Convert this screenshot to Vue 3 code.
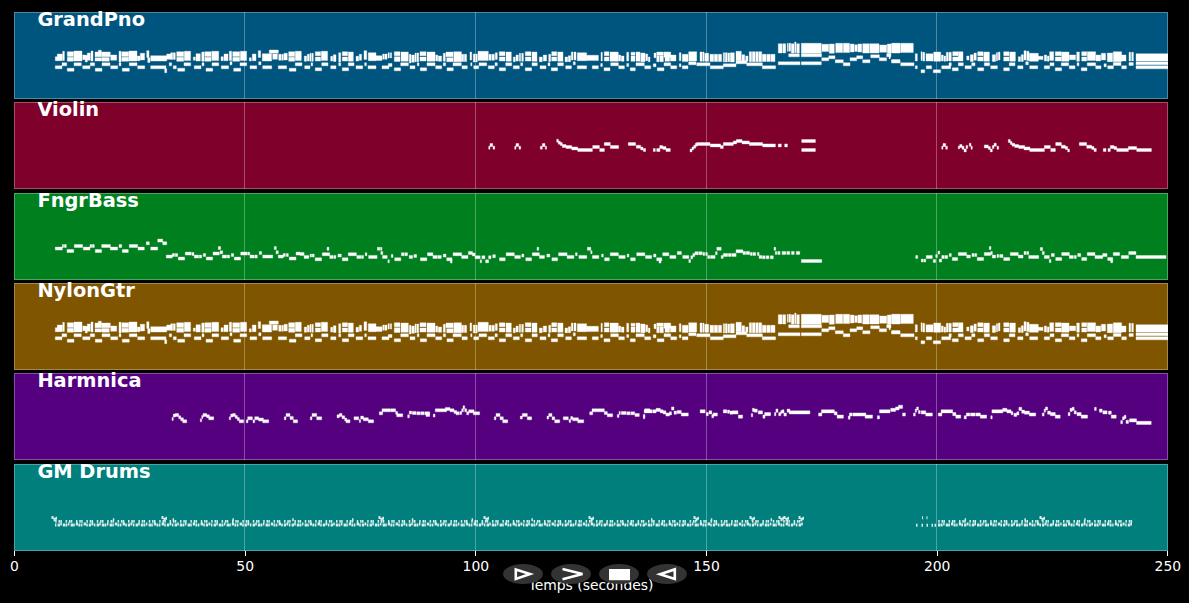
<template>
  <div class="player">
    <div class="tracks">
      <section v-for="track in tracks" :key="track.name" class="track" :class="track.color">
        <h2>{{ track.name }}</h2>
        <svg class="roll" :viewBox="`14 ${track.top} 1154 87`" preserveAspectRatio="none">
          <path v-for="(d, i) in track.paths" :key="i" class="notes" :class="{ drums: track.color === 'teal' }" :d="d" />
          <path class="grid" :d="`M244.5 ${track.top}v87M475.5 ${track.top}v87M706.5 ${track.top}v87M936.5 ${track.top}v87`" />
        </svg>
      </section>
    </div>
    <div class="axis">
      <div v-for="t in ticks" :key="t" class="tick"><span>{{ t }}</span></div>
    </div>
    <p class="label">Temps (secondes)</p>
    <div class="controls">
      <button v-for="icon in icons" :key="icon.name" :aria-label="icon.name">
        <svg viewBox="0 0 40 20" width="40" height="20">
          <path :d="icon.d" :class="{ solid: icon.solid }" />
        </svg>
      </button>
    </div>
  </div>
</template>

<script setup>
const ticks = [0, 50, 100, 150, 200, 250];

const icons = [
  { name: 'play', d: 'M12.8 5.6L27 10.1L12.8 14.9Z' },
  { name: 'forward', d: 'M11.5 5L31.5 10.1L11.5 15.3' },
  { name: 'stop', d: 'M10 5h21v11.2h-21z', solid: true },
  { name: 'back', d: 'M27.8 5.4V15L13 10.2Z' },
];

// "start-end@pitch*height" in 1/scale pixels from the phrase origin
function phrase(ox, oy, text, scale) {
  return text.trim().split(/[\s,]+/).map((note) => {
    const [span, rest] = note.split('@');
    const [x1, x2] = span.split('-').map(Number);
    const [y, h = 9] = rest.split('*').map(Number);
    const left = (ox + x1 / scale).toFixed(1);
    const top = (oy + (y - h / 2) / scale).toFixed(1);
    return `M${left} ${top}h${((x2 - x1) / scale).toFixed(1)}v${(h / scale).toFixed(1)}H${left}z`;
  }).join('');
}

const piano = [
  [0, 0, `166-172@176*12 172-187@172*20 188-193@168*28 202-221@162*14 202-221@178*12 222-246@168*30 248-256@172*14 256-262@176*20
    262-271@170*22 273-279@168*30 285-305@163*14 285-305@178*10 295-304@155*9 306-331@163*14 306-328@178*11 332-350@173*16 357-363@170*32 365-386@162*14
    365-386@178*12 387-411@168*30 412-420@175*14 421-434@170*20 440-447@162*20 443-450@180*14 452-500@175*16 500-512@170*16
    512-518@168*20 520-526@168*20 530-551@162*14 530-551@178*12 553-572@168*28 580-586@176*10 588-601@172*22 605-612@170*28 614-633@162*14 614-633@178*12
    635-656@168*28 663-670@176*12 672-684@172*20 688-695@168*28 698-719@162*14 698-719@178*12 721-740@168*28 748-754@178*10 757-768@172*20
    775-782@162*20 787-815@172*22 808-835@155*10 818-832@170*16 836-843@172*18 845-850@172*18 852-862@170*20 866-884@162*14 866-884@178*12 886-900@168*28
    166-186@202 186-200@193 202-222@209 222-244@193 248-270@202 271-284@193 286-306@209 306-330@193 332-353@202 357-363@193
    367-388@209 388-411@193 413-434@202 452-498@202 494-500@212*12 508-515@193 520-529@202 533-554@209 552-572@193 583-603@202
    606-612@193 618-638@209 636-656@193 664-686@202 690-696@190 701-722@209 720-740@193 750-770@202 776-783@190 788-815@202
    835-860@202 868-888@209 886-900@193`],
  [300, 30, `0-4@78*28 13-20@86*16 22-28@83*20 30-34@82*24 36-40@82*24 46-62@71*12 46-62@87*12 64-83@78*28 92-98@86*14 100-108@84*20 116-122@82*28
    127-143@71*12 127-143@87*12 145-160@80*28 168-176@86*14 178-185@82*18 192-200@75*26 205-228@80*24 228-246@84*14 248-253@80*16 255-261@80*16 264-268@76*16 271-275@76*16
    283-300@71*12 283-300@87*14 303-325@80*28 328-333@86*26 335-343@86*22 345-349@82*26 351-356@82*26 360-378@71*12 360-378@87*12 381-405@80*28 407-413@84*18
    415-425@86*16 430-436@82*24 438-459@73*14 440-459@89*12 461-484@80*30 485-491@84*22 493-500@84*22 510-515@78*24 520-526@84*24 528-532@84*24 534-565@78*28
    567-573@82*18 575-583@82*18 586-592@78*20 598-615@71*12 598-615@87*12 618-634@80*28 640-646@88*14 648-655@84*18 658-662@82*24 665-670@82*24 676-693@71*12 676-693@87*12
    696-711@80*28 718-727@88*14 730-740@84*18 746-752@84*22 755-770@71*12 755-770@87*12 773-789@80*28 795-803@88*14 805-812@86*18 814-819@78*24 822-828@78*24
    832-860@80*24 860-895@84*16
    0-6@103 14-30@112 33-38@103 46-65@118 65-84@103 92-108@112 116-122@103 127-146@118 145-162@103 168-188@112 194-199@103
    204-228@112 246-267@112 265-276@105 283-302@118 302-325@103 330-345@112 352-357@103 361-380@118 381-405@103 407-425@112
    430-437@103 441-460@118 459-484@103 486-502@112 512-516@103 521-536@112 537-560@103 565-583@112 585-592@103 598-617@118
    617-635@103 640-658@112 662-668@103 676-695@118 696-712@103 720-738@112 744-750@103 754-773@118 773-790@103 797-814@112
    820-826@100 832-860@112 877-895@112`],
  [600, 30, `3-7@80*26 13-27@71*12 13-27@87*12 30-55@80*28 56-62@84*18 64-72@86*16 80-86@80*26 93-105@71*9 93-105@86*16 108-120@80*28 122-135@82*26
    137-143@82*20 145-150@88*14 162-168@76*14 170-190@71*10 170-177@86*18 179-190@86*18 192-212@74*16 195-209@88*12 211-228@84*18 238-243@80*24 247-264@84*22 266-290@79*28
    300-306@80*28 308-312@80*28 314-326@82*24 330-341@84*22 343-353@84*22 355-365@84*22 370-374@82*28 376-382@82*28 384-389@82*26 391-403@82*28 408-424@78*28
    426-434@84*20 437-444@86*16 448-455@80*30 457-465@80*30 467-475@80*30 477-485@80*30 487-498@84*22 500-511@84*22 513-525@84*22
    535-547@55*28 549-557@55*28 562-565@52*24 567-572@52*24 574-582@55*28 584-588@52*32 590-598@55*28 604-664@55*30 666-686@54*22 688-703@56*28
    707-728@54*28 730-749@54*28 751-762@54*24 764-772@54*20 774-785@54*24 788-808@55*28 810-837@55*28 839-860@56*22 862-873@56*28 875-900@55*28
    566-598@76 604-665@76 535-600@100 604-664@100 665-686@88 686-705@82 706-730@94 730-750@103 750-770@88 770-788@82 788-810@94
    812-838@79 838-860@88 860-873@76 875-900@94
    2-7@105 12-30@118 32-55@103 56-73@112 80-86@105 91-106@118 108-133@103 134-152@112 160-168@106 172-192@118 192-212@103
    212-230@112 238-243@106 247-264@112 266-288@100 290-330@103 331-370@112 370-408@106 408-440@97 440-487@103 487-527@112`],
  [889, 30, `0-5@57*28 8-34@54*28 36-73@54*28 0-4@82 8-33@94 35-75@103 79-85@82*22 79-85@112 96-99@78*26 101-107@80*26 111-132@82*22
    134-155@80*28 157-163@84*18 165-170@86*16 172-178@80*26 180-187@80*26 191-207@71*12 191-222@87*12 208-222@73*16 233-240@84*12 244-253@84*20 255-262@80*22
    266-282@71*12 266-282@87*12 284-301@80*28 310-320@84*20 322-326@80*24 328-333@78*24 344-360@71*12 344-360@87*12 362-379@80*28 388-395@87*14 397-403@84*20 405-411@76*28
    413-420@78*28 421-448@82*24 448-462@84*10 466-473@84*18 475-480@86*16 482-494@78*26 499-517@71*12 499-517@87*12 518-540@80*28 541-560@82*14 563-571@80*28
    578-593@71*12 578-593@87*12 595-620@78*26 621-635@84*18 637-650@80*20 655-671@82*26 673-698@80*30 698-711@84*18 720-725@80*26 728-733@80*26
    96-107@124 112-128@112 133-155@124 158-185@112 180-187@103 190-208@118 208-223@103 228-247@112 248-258@103 266-284@118
    286-302@103 305-325@112 344-361@118 361-378@103 386-402@112 410-418@100 422-446@112 466-482@112 483-495@103 499-518@118
    517-539@103 541-558@112 564-570@103 577-594@118 595-620@103 620-636@112 645-652@106 656-673@112 673-696@102 698-712@112
    720-733@102 741-837@82*22 741-837@100*9 741-837@112*9`],
];

const violin = [
  [470, 125, `56-60@69 60-68@61 69-74@69 134-138@69 138-146@61 147-152@69 211-217@69 217-225@61 226-230@69 260-265@48 265-271@54 271-277@58
    277-288@64 288-305@67 305-323@71 323-367@76 368-388@67 389-403@76 403-421@58 421-446@67 475-497@58 499-512@66 512-519@71
    520-527@76 550-556@76 560-570@76 569-578@67 578-588@70 588-601@76 660-666@77 666-671@71 671-677@66 676-682@60 680-720@58
    721-752@62 751-760@67 760-790@58 790-800@53 799-816@49 816-838@53 838-878@58 878-916@62 925-934@62 944-952@62 995-1036@49
    995-1036@76`],
  [920, 125, `65-69@69 69-77@61 77-82@69 115-119@68 119-126@64 126-132@69 132-139@77 138-143@67 148-153@60 153-157@69 193-198@65
    198-205@65 205-211@70 211-217@77 217-222@67 222-229@60 231-236@69 265-271@49 271-276@55 276-284@60 284-296@64 296-314@67
    312-330@71 329-373@76 373-391@67 392-406@76 407-424@58 424-436@66 436-443@70 443-448@77 478-500@58 500-515@66 515-522@70
    522-529@76 550-558@76 564-571@76 571-582@67 582-590@70 590-625@76 625-650@70 650-694@76`],
];

const bass = [
  [0, 185, `166-187@190 187-191@182 193-199@182 201-221@197 223-248@182 250-270@190 270-275@182 277-283@182 286-305@197 305-331@182 331-353@190 357-365@182
    367-385@197 388-413@182 414-433@190 439-448@174 452-473@190 473-488@166 488-500@174 499-517@214 517-524@209 526-533@209 535-554@220
    556-574@205 576-582@206 583-596@214 598-605@214 610-617@209 619-638@220 639-658@205 655-662@188 660-668@201 667-680@214 682-689@214 694-701@209 703-722@220
    722-742@205 744-749@205 750-763@214 765-772@214 778-785@203 788-818@214 823-829@188 828-835@201 835-850@214 850-856@209 859-865@209 868-888@220 888-900@205`],
  [300, 235, `0-12@55 12-26@64 30-34@60 36-42@60 45-64@71 66-88@56 80-86@40 88-98@64 100-106@64 112-122@60 125-142@71 143-167@56 168-180@64 182-188@64 193-198@56
    203-228@64 229-236@40 238-242@40 239-245@52 244-258@64 260-264@77 270-275@61 280-298@71 300-308@56 310-318@56 323-333@64 337-345@61 356-375@71
    377-393@56 393-405@64 407-418@64 424-432@60 434-450@71 445-450@78 453-478@56 478-497@64 498-510@52 510-518@57 518-533@65 533-537@77
    538-547@65 549-558@77 558-565@65 570-578@62 590-607@71 610-634@56 635-652@64 656-662@60 668-685@71 687-708@56 701-706@40
    708-723@64 730-739@60 745-762@71 765-790@56 790-810@64 815-820@56 825-848@64 850-860@40 860-864@50 865-884@64 892-897@60
    901-915@71 918-942@56 943-962@64 968-973@60 978-992@71 996-1020@56 1022-1040@64 1046-1053@60 1055-1070@71 1062-1068@78
    1073-1091@56 1094-1112@64 1116-1128@52 1132-1150@64 1150-1155@76 1156-1162@65 1162-1168@58 1168-1178@53 1180-1190@53 1192-1197@55 1200-1205@55
    1206-1212@64 1214-1228@64 1229-1234@53 1233-1246@40 1246-1252@64 1252-1265@58 1267-1276@58 1278-1290@58 1290-1310@47 1310-1318@52 1320-1330@52 1332-1338@55
    1340-1348@55 1353-1358@55 1358-1366@64 1368-1376@65 1379-1387@65 1391-1400@65 1402-1407@40 1406-1410@52 1413-1420@52 1426-1437@52 1440-1449@52 1454-1462@52
    1468-1478@52 1483-1543@76`, 2.958],
  [880, 235, `107-113@65 124-130@76 132-137@76 139-157@65 160-167@77 167-172@62 174-179@52 178-185@76 185-192@65 194-203@65 208-214@59
    217-233@71 235-260@56 260-271@64 276-282@59 284-290@59 292-311@71 313-332@56 328-333@38 332-337@53 337-347@64 351-356@62 359-369@62 371-389@71
    391-415@56 415-429@64 432-438@53 440-446@53 446-476@65 481-488@41 487-493@53 493-508@65 508-513@77 514-523@59 527-545@71 545-568@56
    568-580@65 583-589@65 593-602@59 605-620@71 622-645@56 645-668@65 668-681@59 683-698@71 692-698@78 700-719@56 724-746@65 746-768@53
    768-858@65`],
];

const harmonica = [
  [150, 390, `66-70@88 70-76@78 76-86@76 86-92@83 92-100@89 98-110@95 151-155@92 155-159@82 159-170@76 170-178@80 176-191@86
    238-242@86 242-248@78 248-256@76 256-262@82 262-268@88 268-281@95 289-294@95 293-307@86 309-314@95 314-326@86 326-340@90
    338-356@95 403-408@86 408-420@76 420-430@85 430-443@95 481-486@86 486-500@76 500-515@86 561-568@80 568-576@76 576-584@83
    584-590@90 588-600@95 612-626@86 628-632@94 632-640@84 640-655@89 655-671@95 688-698@71 696-720@62 721-737@62 737-743@70
    740-758@77 773-778@80 778-785@69 787-798@70 800-811@71 813-823@71 825-839@71 828-839@76 850-855@78 856-890@62 886-900@58 900-912@62 912-920@67
    918-928@71 930-935@70 935-940@62 939-944@53 944-950@62 950-956@71 956-972@65 970-989@71 1033-1038@86 1038-1050@76
    1050-1060@86 1058-1073@95 1111-1117@84 1117-1132@76 1132-1145@86 1191-1196@84 1196-1206@76 1206-1214@86 1214-1229@95
    1240-1255@86 1257-1262@94 1262-1268@85 1268-1285@89 1283-1301@95 1319-1328@71 1326-1363@62 1363-1372@70 1372-1388@77
    1402-1407@79 1407-1411@70 1414-1428@70 1430-1440@71 1442-1454@71 1455-1468@76 1480-1485@79 1484-1500@62`],
  [640, 390, `10-13@79 12-34@62 36-46@62 46-58@58 58-66@62 66-74@65 74-84@71 84-90@68 90-97@54 97-104@66 106-118@64 118-138@71 172-186@62 189-195@70
    197-205@65 205-210@76 209-221@71 238-248@62 250-256@63 257-264@66 264-280@65 281-293@77 318-322@73 321-326@58 326-335@60 338-350@65
    351-357@77 356-373@70 384-388@70 388-394@60 396-402@70 402-406@64 406-411@62 411-418@71 420-428@60 426-485@65 510-519@71
    518-555@62 555-563@68 563-581@77 595-600@80 598-606@71 608-645@71 643-664@77 678-684@79 684-714@62 716-730@58 730-740@54 738-750@49
    750-758@71 781-786@71 786-790@60 790-795@54 795-800@64 803-816@65 816-835@71 852-862@71 860-893@62 893-902@70 902-916@77
    926-932@79 932-942@71 944-957@71 959-972@71 972-990@77 1002-1006@79 1005-1036@62 1036-1048@58 1048-1060@62 1060-1065@67 1068-1076@72 1076-1082@68
    1082-1090@55 1090-1098@63 1098-1112@66 1112-1130@71 1149-1154@71 1154-1158@60 1158-1164@54 1164-1172@66 1172-1186@70
    1186-1200@77 1223-1228@70 1228-1234@58 1234-1240@55 1240-1246@65 1248-1260@70 1260-1278@77 1298-1303@55 1312-1320@60
    1322-1334@65 1338-1346@66 1346-1360@77 1373-1378@93 1378-1383@82 1383-1388@78 1388-1395@92 1398-1418@88 1418-1460@95`, 2.856],
];

// Steady beat: kick on the bottom line, hats above it, fills higher up
function drumPath() {
  const fills = [53, 163, 380, 485, 590, 695, 751, 780, 785, 800, 1041];
  const kicks = [2, 1.4, 2.4, 1.6, 2.2];
  let d = '';
  let step = 0;
  const beat = (from, to) => {
    for (let x = from; x < to; x += 2.6) {
      step++;
      const w = kicks[step % 5];
      d += `M${x.toFixed(1)} ${step % 3 ? 523.2 : 522.2}h${w}v2.9h-${w}z`;
      if (step % 4) d += `M${(x + (step % 2 ? 0.2 : 0.9)).toFixed(1)} 519.6h1.5v2.8h-1.5z`;
      if (step % 23 === 0) d += `M${(x + 0.6).toFixed(1)} 518h1.5v3h-1.5z`;
    }
  };
  beat(55, 802);
  beat(938, 1131);
  fills.forEach((x) => {
    d += `M${x - 1.5} 515.8h2v3h-2zM${x + 0.5} 517.5h2v3.5h-2zM${x + 2.5} 516.5h1.5v3h-1.5z`;
  });
  [916, 921.5, 926.5, 931.5, 934.5].forEach((x) => {
    d += `M${x} 523.5h1.5v3h-1.5z`;
  });
  [922, 926.5].forEach((x) => {
    d += `M${x} 516h1v3h-1z`;
  });
  return d;
}

const toPaths = (parts, dy = 0) => parts.map(([x, y, text, scale = 3]) => phrase(x, y + dy, text, scale));

const tracks = [
  { name: 'GrandPno', color: 'blue', top: 12, paths: toPaths(piano) },
  { name: 'Violin', color: 'red', top: 102.3, paths: toPaths(violin) },
  { name: 'FngrBass', color: 'green', top: 192.7, paths: toPaths(bass) },
  { name: 'NylonGtr', color: 'orange', top: 283, paths: toPaths(piano, 271) },
  { name: 'Harmnica', color: 'purple', top: 373.4, paths: toPaths(harmonica) },
  { name: 'GM Drums', color: 'teal', top: 463.7, paths: [drumPath()] },
];
</script>

<style>
body {
  margin: 0;
  background: #000;
}
</style>

<style scoped>
.player {
  position: relative;
  box-sizing: border-box;
  width: 1189px;
  height: 603px;
  padding: 12px 21px 0 14px;
  overflow: hidden;
  background: #000;
  color: #fff;
  font-family: "DejaVu Sans", sans-serif;
}

.tracks {
  display: grid;
  grid-template-rows: repeat(6, 87px);
  gap: 3.34px;
}

.track {
  position: relative;
  box-shadow: inset 0 0 0 1px rgba(255, 255, 255, 0.3);
}

.blue { background: #00557f; }
.red { background: #7f002a; }
.green { background: #007f1f; }
.orange { background: #7f5500; }
.purple { background: #55007f; }
.teal { background: #007f7c; }

h2 {
  position: absolute;
  top: -3px;
  left: 23.4px;
  margin: 0;
  font-size: 19.4px;
  line-height: 22px;
  font-weight: bold;
}

.roll {
  display: block;
  width: 1154px;
  height: 87px;
}

.notes {
  fill: #fff;
  stroke: #fff;
  stroke-width: 0.35;
}

.drums {
  stroke: none;
  fill-opacity: 0.85;
}

.grid {
  fill: none;
  stroke: rgba(255, 255, 255, 0.3);
  stroke-width: 1;
}

.axis {
  display: flex;
  justify-content: space-between;
  margin-right: -0.4px;
}

.tick {
  display: flex;
  justify-content: center;
  width: 1px;
  height: 5px;
  background: #fff;
}

.tick span {
  margin-top: 6px;
  font-size: 13.9px;
  line-height: 18px;
}

.label {
  margin: 20px 0 0;
  font-size: 13.9px;
  line-height: 18px;
  text-align: center;
}

.controls {
  position: absolute;
  top: 564px;
  left: 503px;
  display: flex;
  gap: 8px;
}

.controls button {
  width: 40px;
  height: 20px;
  padding: 0;
  border: 0;
  border-radius: 50%;
  background: #333;
}

.controls svg {
  display: block;
}

.controls path {
  fill: none;
  stroke: #fff;
  stroke-width: 2.6;
}

.controls .solid {
  fill: #fff;
  stroke: none;
}
</style>
